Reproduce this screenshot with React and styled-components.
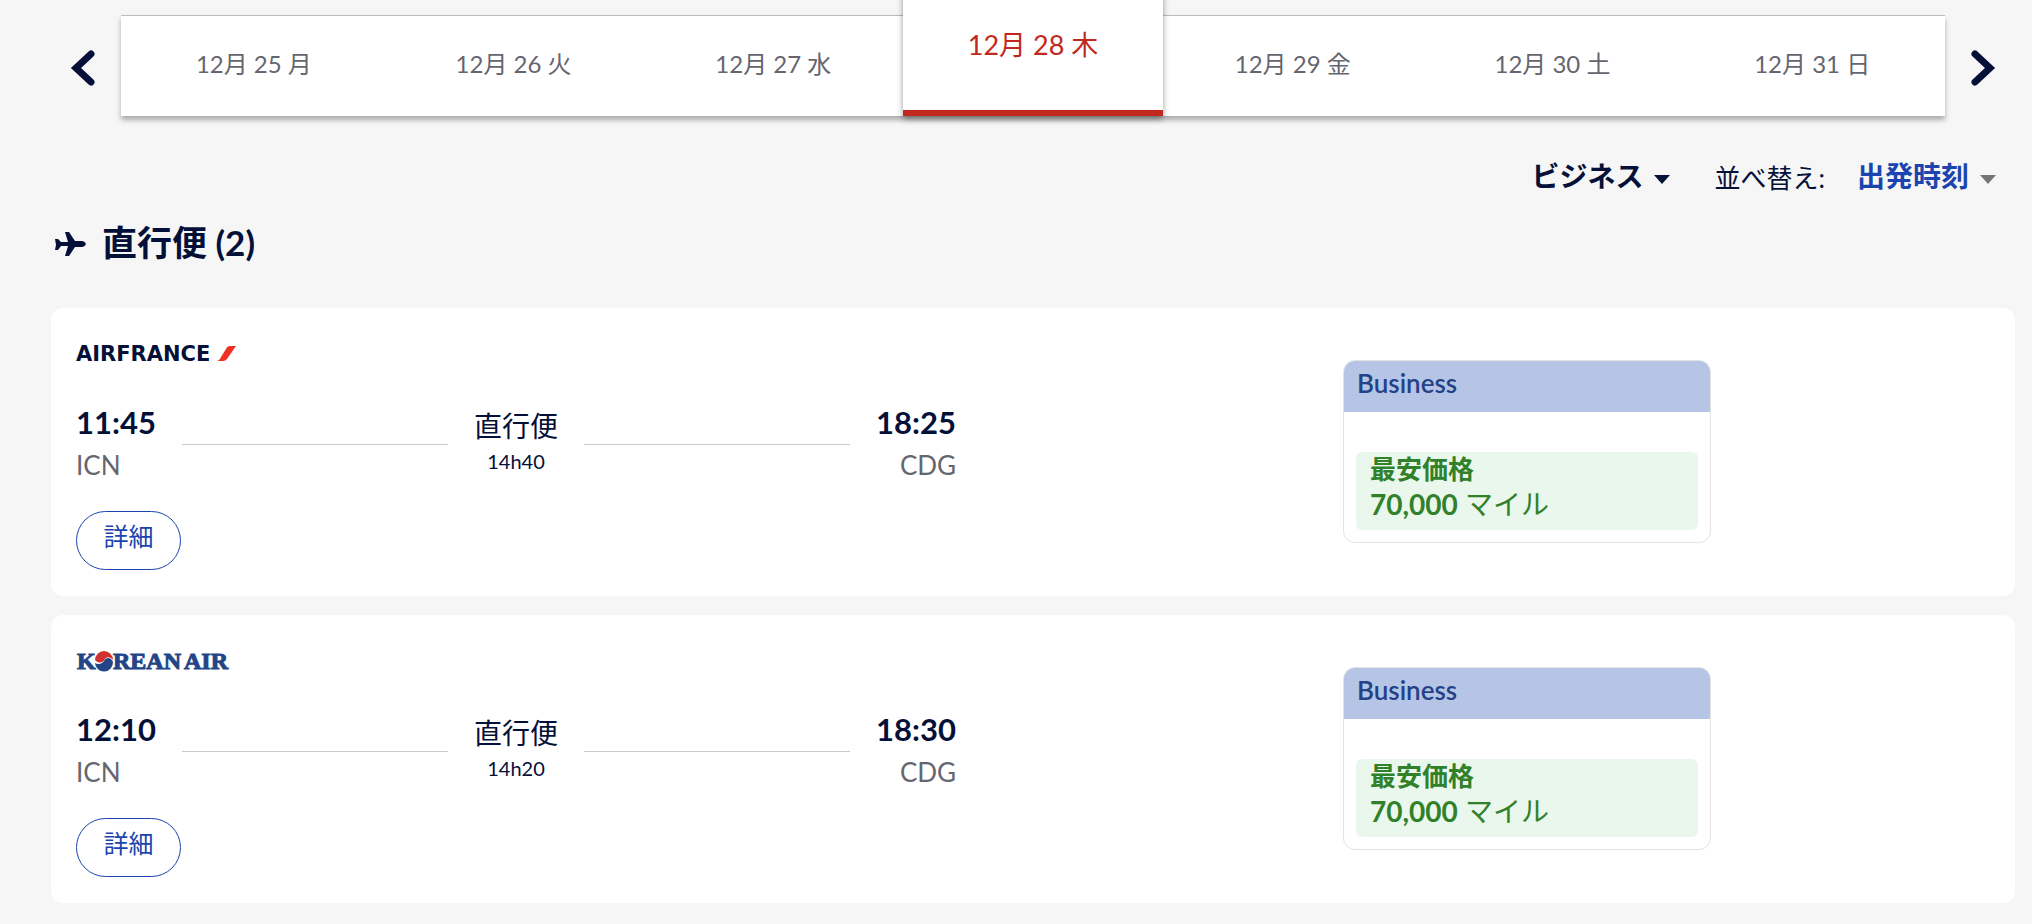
import React from "react";
import styled, { createGlobalStyle } from "styled-components";

const GlobalStyle = createGlobalStyle`
  * {
    box-sizing: border-box;
  }

  body {
    margin: 0;
    background: #f6f6f6;
    color: #051039;
    font-family: Lato, "Noto Sans CJK JP", sans-serif;
    font-size: 24px;
  }

  button,
  select {
    font-family: inherit;
    color: inherit;
    background: none;
    border: 0;
    padding: 0;
    cursor: pointer;
  }
`;

const Page = styled.main`
  padding: 15px 17px 20px 51px;
`;

const DateNav = styled.nav`
  display: grid;
  grid-template-columns: 70px minmax(0, 1fr) 70px;
`;

const Arrow = styled.button`
  display: flex;
  align-items: center;
  justify-content: ${props => (props.$end ? "flex-end" : "flex-start")};
  padding: 5px 19px 0;
`;

const Days = styled.div`
  display: flex;
  height: 101px;
  padding: 0 3px;
  background: white;
  border-top: 1px solid #bcbcbc;
  box-shadow: 0 4px 5px rgba(0, 0, 0, 0.3);
`;

const Day = styled.button`
  flex: 1 1 0;
  height: 100px;
  padding-bottom: 8px;
  color: #65656f;
  font-size: 24px;
  white-space: nowrap;

  &[aria-current] {
    height: 132px;
    margin-top: -32px;
    padding-bottom: 8px;
    background: white;
    border-bottom: 6px solid #c2281d;
    box-shadow: 0 3px 6px rgba(0, 0, 0, 0.4);
    color: #c2281d;
    font-size: 27px;
  }
`;

const Toolbar = styled.div`
  display: flex;
  justify-content: flex-end;
  align-items: center;
  height: 40px;
  margin-top: 40px;
  padding-right: 19px;
`;

const SelectWrap = styled.div`
  position: relative;
  display: flex;
  color: ${props => props.$color};
`;

const Select = styled.select`
  appearance: none;
  padding-right: 26px;
  font-size: 28px;
  font-weight: 700;
  line-height: 40px;
`;

const Caret = styled.svg`
  position: absolute;
  right: 0;
  top: 19px;
  pointer-events: none;
`;

const SortLabel = styled.label`
  margin: 0 32px 0 44px;
  font-size: 26px;
`;

const Heading = styled.h2`
  display: flex;
  align-items: center;
  gap: 16px;
  height: 40px;
  margin: 26px 0 46px;
  padding-left: 4px;
  font-size: 35px;
  line-height: 40px;
`;

const FlightList = styled.ul`
  display: grid;
  gap: 19px;
  margin: 0;
  padding: 0;
  list-style: none;
`;

const Card = styled.li`
  display: grid;
  grid-template-columns: 880fr 387fr 368fr 279fr;
  padding: 25px 25px 26px;
  background: white;
  border-radius: 12px;
`;

const Logo = styled.div`
  height: 40px;
  margin-bottom: 28px;
`;

const Route = styled.div`
  display: flex;
  align-items: center;
  gap: 26px;
`;

const Stop = styled.div`
  line-height: 43px;
  text-align: ${props => props.$align};
`;

const Time = styled.div`
  font-size: 31px;
  font-weight: 700;
`;

const Airport = styled.div`
  color: #65656f;
  font-size: 26px;
`;

const Line = styled.div`
  flex: 1;
  height: 1px;
  background: #cacace;
`;

const Duration = styled.div`
  padding-bottom: 4px;
  text-align: center;
  font-size: 20px;
  line-height: 32px;
`;

const Direct = styled.div`
  font-size: 28px;
  line-height: 38px;
`;

const Details = styled.button`
  width: 105px;
  height: 59px;
  margin-top: 24px;
  padding-bottom: 12px;
  border: 1px solid #1b44ae;
  border-radius: 30px;
  color: #1b44ae;
  font-size: 25px;
`;

const Fare = styled.section`
  grid-column: 3;
  align-self: center;
  overflow: hidden;
  border: 1px solid #e4e4e6;
  border-radius: 12px;
`;

const FareTitle = styled.h3`
  height: 51px;
  margin: 0;
  padding-left: 13px;
  background: #b6c5e6;
  color: #234287;
  font-size: 26px;
  font-weight: 600;
  line-height: 44px;
`;

const Price = styled.p`
  margin: 40px 12px 12px;
  padding: 0 14px 8px;
  background: #eaf7ec;
  border-radius: 6px;
  color: #31802a;
  font-size: 26px;
  line-height: 35px;
`;

const Lowest = styled.strong`
  display: block;
`;

const Miles = styled.span`
  display: block;
  font-size: 28px;
`;

const AirFranceLogo = () => (
  <svg width="160" height="40" role="img" aria-label="Air France">
    <text x="0" y="28" fill="#051039" fontFamily="DejaVu Sans" fontWeight="700" fontSize="21">
      AIRFRANCE
    </text>
    <path d="M140 28c3 0 4-2 5-4l5-8c1-2 2-3 4-3h6l-9 13c-1 1-2 2-4 2z" fill="#ee3124" />
  </svg>
);

const KoreanAirLogo = () => (
  <svg width="160" height="40" role="img" aria-label="Korean Air">
    <g
      fill="#234587"
      stroke="#234587"
      strokeWidth="1"
      fontFamily="Liberation Serif"
      fontWeight="700"
      fontSize="24"
    >
      <text x="1" y="29">K</text>
      <text x="37" y="29">REAN</text>
      <text x="108" y="29">AIR</text>
    </g>
    <circle cx="28" cy="21" r="10" fill="white" />
    <path d="M19 20a9 9 0 0 1 18 0c-2-3-6-4-8-1-2 4-6 5-10 1z" fill="#d0312d" />
    <path d="M37 22a9 9 0 0 1-18 1c3 2 7 1 9-2 2-4 7-4 9 1z" fill="#234587" />
  </svg>
);

const Chevron = ({ points }) => (
  <svg width="25" height="38" fill="none" stroke="currentColor" strokeWidth="7" strokeLinecap="round">
    <polyline points={points} />
  </svg>
);

const DropDown = ({ id, label, color, caret = "currentColor", options }) => (
  <SelectWrap $color={color}>
    <Select id={id} aria-label={label}>
      {options.map(option => (
        <option key={option}>{option}</option>
      ))}
    </Select>
    <Caret width="16" height="9">
      <path d="M0 0h16l-8 9z" fill={caret} />
    </Caret>
  </SelectWrap>
);

const days = [
  "12月 25 月",
  "12月 26 火",
  "12月 27 水",
  "12月 28 木",
  "12月 29 金",
  "12月 30 土",
  "12月 31 日"
];

const flights = [
  { logo: <AirFranceLogo />, departure: "11:45", arrival: "18:25", duration: "14h40" },
  { logo: <KoreanAirLogo />, departure: "12:10", arrival: "18:30", duration: "14h20" }
];

const Flight = ({ logo, departure, arrival, duration }) => (
  <Card>
    <div>
      <Logo>{logo}</Logo>
      <Route>
        <Stop $align="left">
          <Time>{departure}</Time>
          <Airport>ICN</Airport>
        </Stop>
        <Line />
        <Duration>
          <Direct>直行便</Direct>
          {duration}
        </Duration>
        <Line />
        <Stop $align="right">
          <Time>{arrival}</Time>
          <Airport>CDG</Airport>
        </Stop>
      </Route>
      <Details type="button">詳細</Details>
    </div>
    <Fare>
      <FareTitle>Business</FareTitle>
      <Price>
        <Lowest>最安価格</Lowest>
        <Miles>
          <strong>70,000</strong> マイル
        </Miles>
      </Price>
    </Fare>
  </Card>
);

const App = () => {
  return (
    <>
      <GlobalStyle />
      <Page lang="ja">
        <DateNav>
          <Arrow type="button" aria-label="前へ">
            <Chevron points="21,5 6,19 21,33" />
          </Arrow>
          <Days>
            {days.map((day, i) => (
              <Day key={day} type="button" aria-current={i === 3 ? "date" : undefined}>
                {day}
              </Day>
            ))}
          </Days>
          <Arrow type="button" aria-label="次へ" $end>
            <Chevron points="4,5 19,19 4,33" />
          </Arrow>
        </DateNav>
        <Toolbar>
          <DropDown id="cabin" label="クラス" color="#051039" options={["ビジネス"]} />
          <SortLabel htmlFor="sort">並べ替え:</SortLabel>
          <DropDown id="sort" color="#1b44ae" caret="#757575" options={["出発時刻"]} />
        </Toolbar>
        <Heading>
          <svg width="31" height="28" fill="currentColor">
            <path d="M0 11h3l3 3h7L10 4h4l6 9h7c5 1 5 5 0 6h-7l-6 9h-4l3-10H6l-3 4H0l1-5z" />
          </svg>
          直行便 (2)
        </Heading>
        <FlightList>
          {flights.map(flight => (
            <Flight key={flight.departure} {...flight} />
          ))}
        </FlightList>
      </Page>
    </>
  );
};

export default App;
